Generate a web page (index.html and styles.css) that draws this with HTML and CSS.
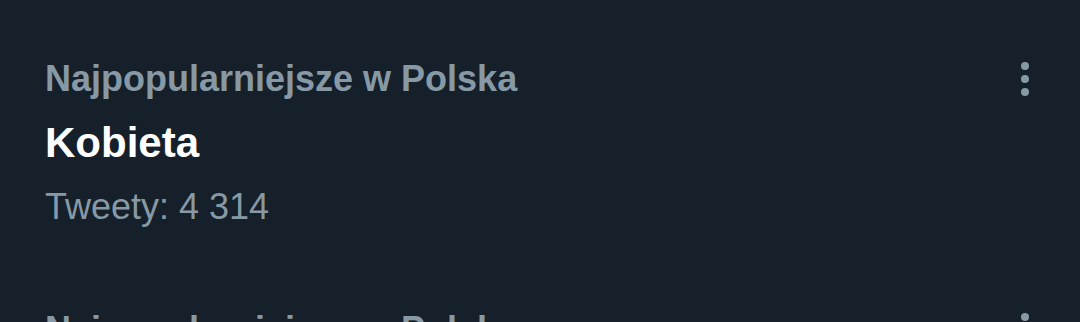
FILE: index.html
```html
<!DOCTYPE html>
<html lang="pl">
<head>
    <meta charset="UTF-8">
    <meta name="viewport" content="width=device-width, initial-scale=1.0">
    <title>Trendy</title>
    <link rel="stylesheet" href="styles.css">
</head>
<body>
    <div class="trends">
        <div class="trend">
            <div class="trend-head">
                <span class="trend-context">Najpopularniejsze w Polska</span>
                <span class="more" aria-label="Więcej">
                    <svg viewBox="0 0 10 34" width="10" height="34">
                        <circle cx="5" cy="4" r="4"></circle>
                        <circle cx="5" cy="17" r="4"></circle>
                        <circle cx="5" cy="30" r="4"></circle>
                    </svg>
                </span>
            </div>
            <div class="trend-name">Kobieta</div>
            <div class="trend-count">Tweety: 4 314</div>
        </div>
        <div class="trend">
            <div class="trend-head">
                <span class="trend-context">Najpopularniejsze w Polska</span>
                <span class="more" aria-label="Więcej">
                    <svg viewBox="0 0 10 34" width="10" height="34">
                        <circle cx="5" cy="4" r="4"></circle>
                        <circle cx="5" cy="17" r="4"></circle>
                        <circle cx="5" cy="30" r="4"></circle>
                    </svg>
                </span>
            </div>
            <div class="trend-name">Bieg</div>
            <div class="trend-count">Tweety: 1 020</div>
        </div>
    </div>
</body>
</html>
```

FILE: styles.css
```css
body {
    margin: 0;
    background-color: #15202b;
    font-family: "Liberation Sans", Arial, sans-serif;
    overflow: hidden;
    height: 322px;
}
.trends {
    display: flex;
    flex-direction: column;
}
.trend {
    padding: 57px 45px 22px 45px;
}
.trend-head {
    display: flex;
    justify-content: space-between;
    align-items: flex-start;
}
.trend-context {
    color: #8899a6;
    font-size: 36px;
    font-weight: bold;
    line-height: 44px;
}
.more {
    margin-top: 5px;
    margin-right: 5px;
}
.more svg {
    display: block;
    fill: #8899a6;
}
.trend-name {
    color: #ffffff;
    font-size: 42px;
    font-weight: bold;
    line-height: 55px;
    margin-top: 14px;
}
.trend-count {
    color: #8899a6;
    font-size: 36px;
    line-height: 44px;
    margin-top: 15px;
}
```
